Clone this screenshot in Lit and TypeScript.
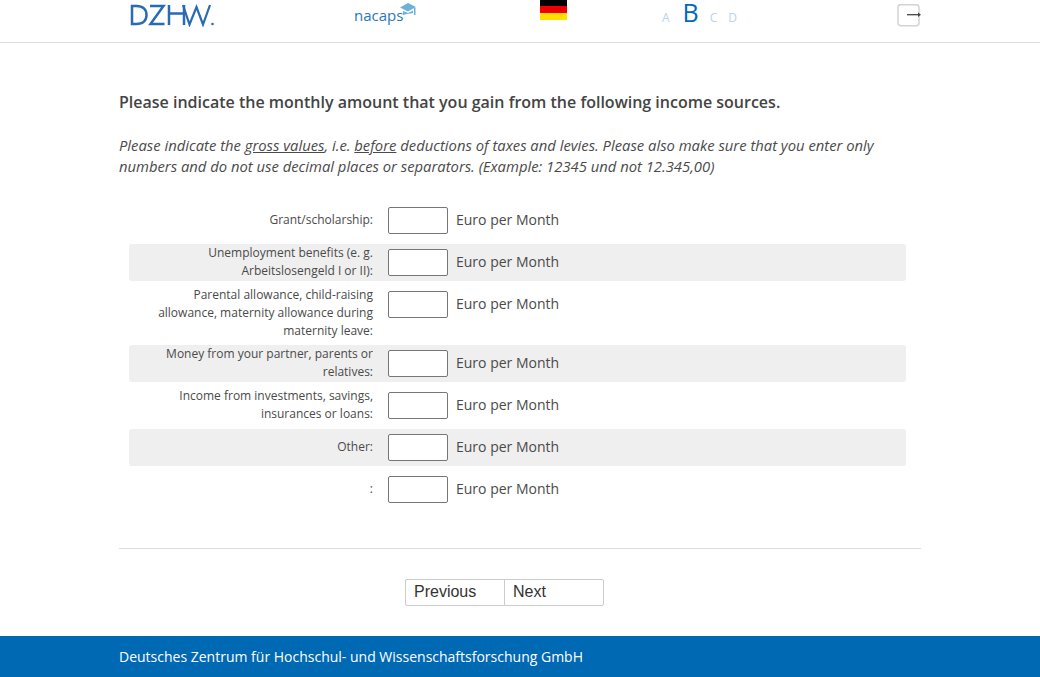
import { LitElement, html, css } from "lit";
import { customElement } from "lit/decorators.js";

const rows = [
  ["Grant/scholarship:", false, true],
  ["Unemployment benefits (e. g. Arbeitslosengeld I or II):", true, false],
  ["Parental allowance, child-raising allowance, maternity allowance during maternity leave:", false, false],
  ["Money from your partner, parents or relatives:", true, false],
  ["Income from investments, savings, insurances or loans:", false, false],
  ["Other:", true, true],
  [":", false, true],
] as const;

@customElement("app-root")
export class AppRoot extends LitElement {
  static styles = css`
    :host { display: block; height: 677px; font-family: "Open Sans", sans-serif; color: #4a4a4a; background: #fff; overflow: hidden; }
    .page { display: flex; flex-direction: column; height: 677px; }
    header { height: 42px; border-bottom: 1px solid #ddd; flex: none; overflow: hidden; }
    .head { position: relative; width: 802px; margin: 0 auto; height: 42px; }
    .dzhw { position: absolute; left: 10px; top: 3px; }
    .nacaps { position: absolute; left: 234px; top: 2px; }
    .flag { position: absolute; left: 421px; top: 0; width: 27px; }
    .flag div { height: 7px; }
    .flag .black { height: 6px; background: #000; }
    .flag .red { background: #e00; }
    .flag .gold { background: #ffdf00; }
    .sizes { position: absolute; left: 543px; top: 0; height: 26px; display: flex; align-items: flex-end; font-size: 12px; color: #b5d3ec; }
    .sizes span { line-height: 16px; margin-right: 12px; }
    .sizes .a { margin-right: 13px; }
    .sizes .c { margin-right: 11px; }
    .sizes .cur { font-size: 25px; line-height: 26px; color: #0069bc; margin: 0 11px 1px 0; }
    .exit { position: absolute; left: 778px; top: 4px; }
    main { flex: 1; width: 802px; margin: 0 auto; }
    h1 { margin: 48px 0 0; font-size: 16px; line-height: 22px; font-weight: 600; color: #444; }
    .hint { margin: 22px 0 0; font-size: 14.8px; line-height: 21px; font-style: italic; color: #4a4a4a; }
    .rows { margin: 25px 0 0 10px; width: 777px; display: flex; flex-direction: column; gap: 5px; }
    .row { display: grid; grid-template-columns: 259px 60px 1fr; border-radius: 3px; min-height: 37px; }
    .row.alt { background: #efefef; }
    .label { box-sizing: border-box; padding: 0 15px 0 10px; font-size: 12px; line-height: 18px; text-align: right; color: #4a4a4a; }
    .label.single { line-height: 35px; }
    input { box-sizing: border-box; width: 60px; height: 27px; margin: 5px 0; border: 1px solid #767676; border-radius: 2px; background: #fff; padding: 0; }
    .unit { padding-left: 8px; font-size: 14px; line-height: 35px; color: #4a4a4a; }
    hr { border: 0; border-top: 1px solid #ddd; margin: 40px 0 0; }
    .nav { display: flex; justify-content: center; margin-top: 30px; padding-right: 31px; }
    button { box-sizing: border-box; height: 27px; width: 100px; border: 1px solid #ccc; background: #fff; font-family: "Liberation Sans", sans-serif; font-size: 16px; text-align: left; padding: 0 8px 2px; color: #333; }
    button.first { border-radius: 2px 0 0 2px; }
    button.second { margin-left: -1px; border-radius: 0 2px 2px 0; }
    footer { flex: none; height: 41px; background: #0069b4; color: #fff; }
    footer div { width: 802px; margin: 0 auto; font-size: 14px; line-height: 42px; }
  `;

  render() {
    return html`<div class="page">
      <header><div class="head">
        <svg class="dzhw" width="88" height="24" viewBox="0 0 88 24" fill="none" stroke="#2a6ab5" stroke-width="2.500">
          <path d="M3 3v18h4.500c6.500 0 10-3.500 10-9s-3.500-9-10-9z"/>
          <path d="M21 3h13.500L21.500 21h14"/>
          <path d="M40 2v20M55 2v20M40 10.500h17"/>
          <path d="M54 2l6.500 19.500L67.500 4l6.500 17.500L81 2" stroke-width="2.200"/>
          <circle cx="83.500" cy="21" r="1.300" fill="#2a6ab5" stroke="none"/>
        </svg>
        <svg class="nacaps" width="66" height="24" viewBox="0 0 66 24">
          <text x="1" y="19" font-family="Open Sans" font-size="15" fill="#2a77b8">nacaps</text>
          <path d="M47 5.500L55 1l8 4-8 4.500z" fill="#6db0d8"/>
          <path d="M50 9l5 2 5-2.500V11c-3 .5-6 1-10 2z" fill="#6db0d8"/>
          <path d="M61 6v7h1.500V6z" fill="#6db0d8"/>
        </svg>
        <div class="flag"><div class="black"></div><div class="red"></div><div class="gold"></div></div>
        <div class="sizes"><span class="a">A</span><span class="cur">B</span><span class="c">C</span><span>D</span></div>
        <svg class="exit" width="26" height="24" viewBox="0 0 26 24" fill="none">
          <rect x="1" y="0.700" width="21" height="21" rx="3" stroke="#d4d4d4" stroke-width="1.500"/>
          <path d="M10 10.700h12" stroke="#444" stroke-width="1.300"/>
          <path d="M21 8.500l3 2.200-3 2.200z" fill="#444"/>
        </svg>
      </div></header>
      <main>
        <h1>Please indicate the monthly amount that you gain from the following income sources.</h1>
        <p class="hint">Please indicate the <u>gross values</u>, i.e. <u>before</u> deductions of taxes and levies. Please also make sure that you enter only numbers and do not use decimal places or separators. (Example: 12345 und not 12.345,00)</p>
        <div class="rows">
          ${rows.map(([t, alt, single]) => html`<div class="row ${alt ? "alt" : ""}">
            <div class="label ${single ? "single" : ""}">${t}</div>
            <input type="text" />
            <div class="unit">Euro per Month</div>
          </div>`)}
        </div>
        <hr />
        <div class="nav"><button class="first">Previous</button><button class="second">Next</button></div>
      </main>
      <footer><div>Deutsches Zentrum für Hochschul- und Wissenschaftsforschung GmbH</div></footer>
    </div>`;
  }
}
